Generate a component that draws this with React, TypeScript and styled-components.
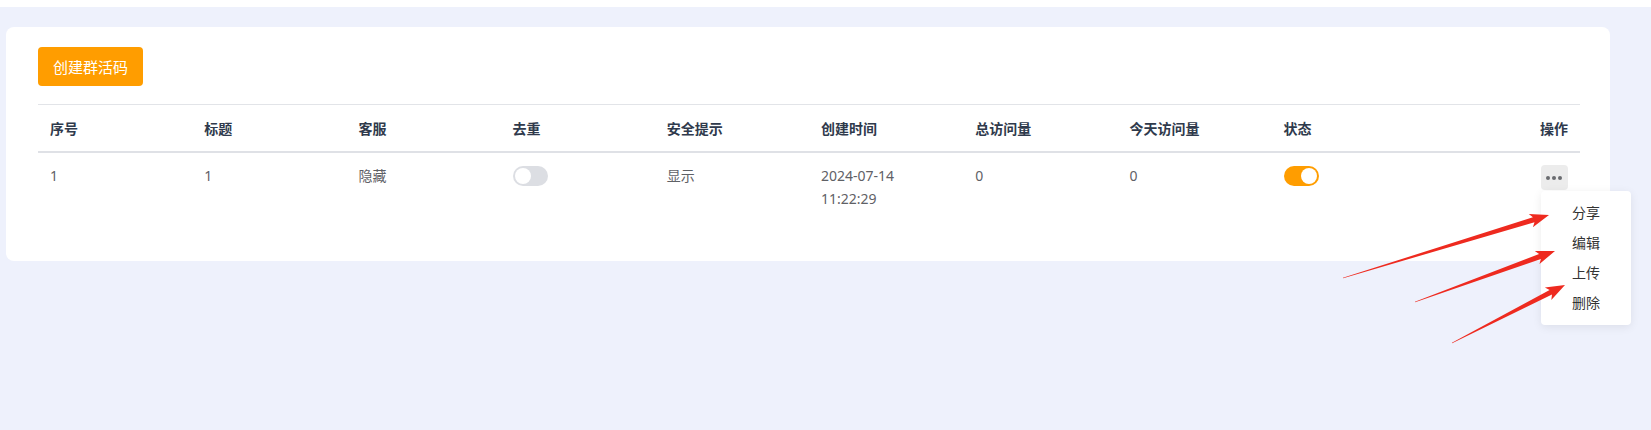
import { createGlobalStyle, styled } from "styled-components";

const GlobalStyle = createGlobalStyle`
  html, body {
    margin: 0;
    padding: 0;
    background: #ffffff;
    font-family: "Noto Sans", "Noto Sans CJK SC", sans-serif;
  }
  * { box-sizing: border-box; }
`;

const Page = styled.div`
  padding-top: 7px;
  min-height: 430px;
  display: flex;
  flex-direction: column;
`;

const Canvas = styled.div`
  flex: 1;
  background: #eef1fc;
  padding: 20px 41px 0 6px;
  min-height: 423px;
`;

const Card = styled.div`
  background: #ffffff;
  border-radius: 8px;
  padding: 20px 30px 37px 32px;
`;

const PrimaryButton = styled.button`
  height: 39px;
  padding: 0 15px;
  border: none;
  border-radius: 4px;
  background: #ff9d00;
  color: #ffffff;
  font-family: "Noto Sans CJK SC", sans-serif;
  font-size: 15px;
  cursor: pointer;
`;

const Table = styled.div`
  margin-top: 18px;
  border-top: 1px solid #e2e4e8;
`;

const Row = styled.div<{ $head?: boolean }>`
  display: grid;
  grid-template-columns: repeat(10, 1fr);
  align-items: ${(p) => (p.$head ? "center" : "start")};
  height: ${(p) => (p.$head ? "48px" : "auto")};
  padding: ${(p) => (p.$head ? "0" : "11px 0 14px")};
  border-bottom: ${(p) => (p.$head ? "2px solid #dfe1e6" : "none")};
`;

const Cell = styled.div<{ $head?: boolean; $right?: boolean }>`
  padding: 0 12px;
  font-family: "Noto Sans", "Noto Sans CJK SC", sans-serif;
  font-size: 14px;
  line-height: 23px;
  font-weight: ${(p) => (p.$head ? 700 : 400)};
  color: ${(p) => (p.$head ? "#2f3a4c" : "#5f6166")};
  text-align: ${(p) => (p.$right ? "right" : "left")};
  display: ${(p) => (p.$right ? "flex" : "block")};
  justify-content: flex-end;
`;

const Switch = styled.span<{ $on?: boolean }>`
  display: inline-flex;
  align-items: center;
  justify-content: ${(p) => (p.$on ? "flex-end" : "flex-start")};
  width: 35px;
  height: 20px;
  margin-top: 2px;
  padding: 2px;
  border-radius: 10px;
  background: ${(p) => (p.$on ? "#ff9d00" : "#dcdee3")};

  &::after {
    content: "";
    width: 16px;
    height: 16px;
    border-radius: 50%;
    background: #ffffff;
  }
`;

const ActionWrap = styled.div`
  position: relative;
  margin-top: 1px;
`;

const MoreButton = styled.button`
  width: 27px;
  height: 25px;
  border: none;
  border-radius: 4px;
  background: #ececec;
  display: flex;
  align-items: center;
  justify-content: center;
  gap: 2px;
  padding: 0;
`;

const Dot = styled.span`
  width: 4px;
  height: 4px;
  border-radius: 50%;
  background: #6a6c70;
`;

const Menu = styled.ul`
  position: absolute;
  top: 26px;
  left: 0;
  width: 90px;
  margin: 0;
  padding: 6px 0 8px;
  list-style: none;
  background: #ffffff;
  border-radius: 4px;
  box-shadow: 0 2px 10px rgba(0, 0, 0, 0.08);
  z-index: 5;
`;

const MenuItem = styled.li`
  height: 30px;
  line-height: 30px;
  text-align: center;
  font-family: "Noto Sans CJK SC", sans-serif;
  font-size: 14px;
  color: #333333;
`;

const Overlay = styled.svg`
  position: fixed;
  top: 0;
  left: 0;
  width: 1651px;
  height: 430px;
  pointer-events: none;
  z-index: 10;
`;

const headers = ["序号", "标题", "客服", "去重", "安全提示", "创建时间", "总访问量", "今天访问量", "状态", "操作"];

const arrows: [number, number, number, number][] = [
  [1343, 278, 1549, 215],
  [1415, 302, 1555, 251],
  [1452, 343, 1565, 285],
];

function arrowPoints(x1: number, y1: number, x2: number, y2: number) {
  const dx = x2 - x1;
  const dy = y2 - y1;
  const len = Math.hypot(dx, dy);
  const ux = dx / len;
  const uy = dy / len;
  const nx = -uy;
  const ny = ux;
  const h = 16;
  const bx = x2 - ux * h;
  const by = y2 - uy * h;
  const pts = [
    [x1 + nx * 0.3, y1 + ny * 0.3],
    [bx + nx * 2.6, by + ny * 2.6],
    [bx - ux * 3 + nx * 7, by - uy * 3 + ny * 7],
    [x2, y2],
    [bx - ux * 3 - nx * 7, by - uy * 3 - ny * 7],
    [bx - nx * 2.6, by - ny * 2.6],
    [x1 - nx * 0.3, y1 - ny * 0.3],
  ];
  return pts.map((p) => p.map((v) => v.toFixed(1)).join(",")).join(" ");
}

export default function App() {
  return (
    <>
      <GlobalStyle />
      <Page>
        <Canvas>
          <Card>
            <PrimaryButton>创建群活码</PrimaryButton>
            <Table>
              <Row $head>
                {headers.map((h, i) => (
                  <Cell key={h} $head $right={i === headers.length - 1}>
                    {h}
                  </Cell>
                ))}
              </Row>
              <Row>
                <Cell>1</Cell>
                <Cell>1</Cell>
                <Cell>隐藏</Cell>
                <Cell>
                  <Switch />
                </Cell>
                <Cell>显示</Cell>
                <Cell>
                  2024-07-14
                  <br />
                  11:22:29
                </Cell>
                <Cell>0</Cell>
                <Cell>0</Cell>
                <Cell>
                  <Switch $on />
                </Cell>
                <Cell $right>
                  <ActionWrap>
                    <MoreButton>
                      <Dot />
                      <Dot />
                      <Dot />
                    </MoreButton>
                    <Menu>
                      <MenuItem>分享</MenuItem>
                      <MenuItem>编辑</MenuItem>
                      <MenuItem>上传</MenuItem>
                      <MenuItem>删除</MenuItem>
                    </Menu>
                  </ActionWrap>
                </Cell>
              </Row>
            </Table>
          </Card>
        </Canvas>
      </Page>
      <Overlay viewBox="0 0 1651 430">
        {arrows.map(([a, b, c, d], i) => (
          <polygon key={i} points={arrowPoints(a, b, c, d)} fill="#ee2a1f" />
        ))}
      </Overlay>
    </>
  );
}
